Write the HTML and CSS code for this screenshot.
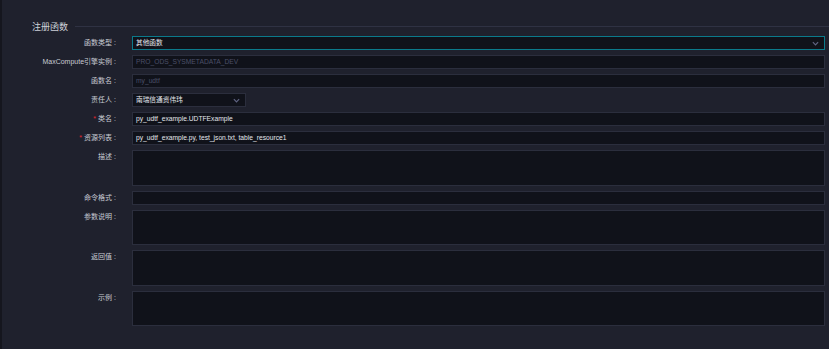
FILE: index.html
```html
<!DOCTYPE html>
<html>
<head>
<meta charset="utf-8">
<link rel="stylesheet" href="styles.css">
</head>
<body>
<div class="page">
  <div class="section-head">
    <span class="section-title">注册函数</span>
    <span class="section-line"></span>
  </div>
  <div class="form">
    <div class="row">
      <label class="label">函数类型<span class="colon">:</span></label>
      <div class="field select focus h-input"><span class="val">其他函数</span><svg class="chev" viewBox="0 0 8 5" width="7" height="5"><path d="M1 1 L4 4 L7 1" fill="none" stroke="#5f6382" stroke-width="1.4"/></svg></div>
    </div>
    <div class="row">
      <label class="label">MaxCompute引擎实例<span class="colon">:</span></label>
      <div class="field h-input"><span class="val dim">PRO_ODS_SYSMETADATA_DEV</span></div>
    </div>
    <div class="row">
      <label class="label">函数名<span class="colon">:</span></label>
      <div class="field h-input"><span class="val dim">my_udtf</span></div>
    </div>
    <div class="row">
      <label class="label">责任人<span class="colon">:</span></label>
      <div class="field select small h-input"><span class="val">南瑞信通资伟玮</span><svg class="chev" viewBox="0 0 8 5" width="7" height="5"><path d="M1 1 L4 4 L7 1" fill="none" stroke="#5f6382" stroke-width="1.4"/></svg></div>
    </div>
    <div class="row">
      <label class="label"><span class="req">*</span>类名<span class="colon">:</span></label>
      <div class="field h-input"><span class="val">py_udtf_example.UDTFExample</span></div>
    </div>
    <div class="row">
      <label class="label"><span class="req">*</span>资源列表<span class="colon">:</span></label>
      <div class="field h-input"><span class="val">py_udtf_example.py, test_json.txt, table_resource1</span></div>
    </div>
    <div class="row top">
      <label class="label">描述<span class="colon">:</span></label>
      <div class="field h-area"></div>
    </div>
    <div class="row">
      <label class="label">命令格式<span class="colon">:</span></label>
      <div class="field h-input"></div>
    </div>
    <div class="row top">
      <label class="label">参数说明<span class="colon">:</span></label>
      <div class="field h-area2"></div>
    </div>
    <div class="row top">
      <label class="label">返回值<span class="colon">:</span></label>
      <div class="field h-area"></div>
    </div>
    <div class="row top">
      <label class="label">示例<span class="colon">:</span></label>
      <div class="field h-area2"></div>
    </div>
  </div>
</div>
</body>
</html>
```

FILE: styles.css
```css
html, body {
  margin: 0;
  padding: 0;
  height: 100%;
}
body {
  background: #1f212d;
  font-family: "Liberation Sans", "Noto Sans CJK SC", sans-serif;
  overflow: hidden;
}
.page {
  height: 100%;
  border-left: 2px solid #15161e;
  box-sizing: border-box;
  padding: 20px 4px 0 0;
}
.section-head {
  display: flex;
  align-items: center;
  height: 13px;
  padding-left: 30px;
}
.section-title {
  font-size: 9px;
  color: #cdd0d8;
  font-family: "Noto Sans CJK SC", sans-serif;
  line-height: 13px;
  width: 43px;
}
.section-line {
  flex: 1;
  height: 1px;
  background: #2f3243;
  margin-right: -4px;
}
.form {
  display: flex;
  flex-direction: column;
  gap: 5px;
  margin-top: 3px;
}
.row {
  display: flex;
  align-items: center;
}
.row.top {
  align-items: flex-start;
}
.label {
  width: 114px;
  flex: none;
  text-align: right;
  font-size: 7px;
  color: #c8cbd3;
  font-family: "Liberation Sans", "Noto Sans CJK SC", sans-serif;
  line-height: 14px;
  padding-right: 16px;
  white-space: nowrap;
}
.colon {
  margin-left: 2px;
}
.req {
  color: #e5262d;
  margin-right: 2px;
}
.field {
  flex: 1;
  box-sizing: border-box;
  background: #10121a;
  border: 1px solid #2b2e3d;
  display: flex;
  align-items: center;
  padding: 0 3px;
}
.h-input { height: 14px; }
.h-area { height: 36px; }
.h-area2 { height: 35px; }
.field.focus {
  border-color: #0b7a8b;
}
.field.small {
  flex: none;
  width: 114px;
}
.select {
  justify-content: space-between;
  padding-right: 5px;
}
.val {
  font-size: 6.7px;
  color: #e4e6ec;
  line-height: 12px;
  white-space: nowrap;
  font-family: "Liberation Sans", "Noto Sans CJK SC", sans-serif;
}
.val.dim {
  color: #4b5068;
}
.chev {
  display: block;
}
```
